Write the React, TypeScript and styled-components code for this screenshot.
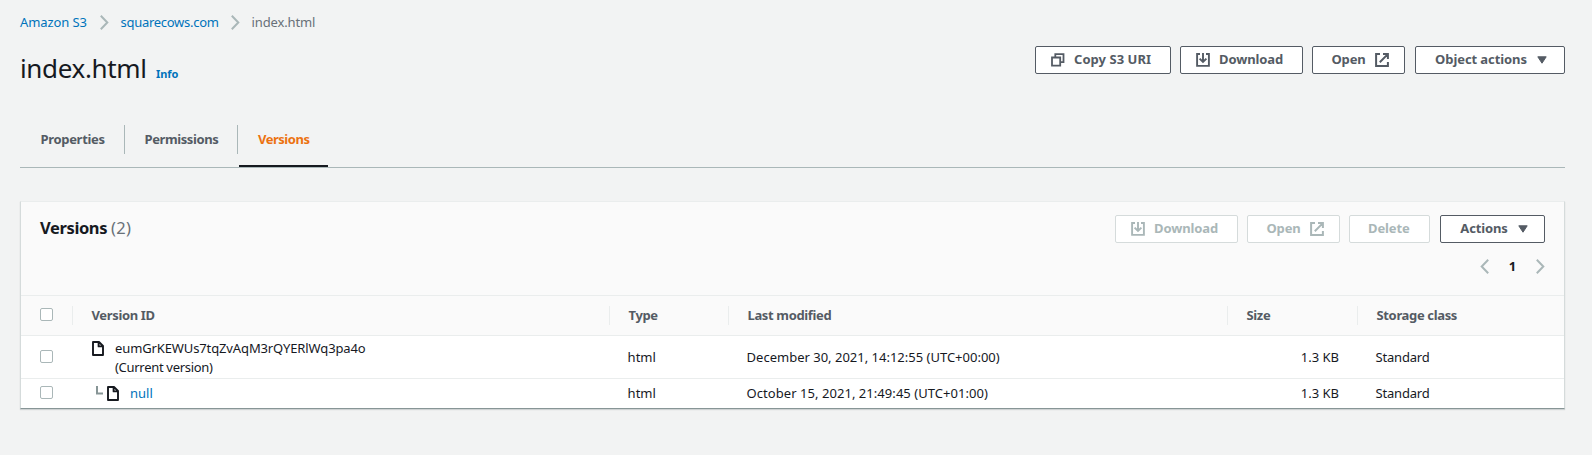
import React from "react";
import styled, { createGlobalStyle, css } from "styled-components";

const GlobalStyle = createGlobalStyle`
  * { box-sizing: border-box; }
  body {
    margin: 0;
    background: #f2f3f3;
    color: #16191f;
    font: 13px/18px "Noto Sans", "Open Sans", sans-serif;
  }
`;

const Page = styled.main`
  height: 455px;
  padding: 13px 27px 0 20px;
  overflow: hidden;
`;

const Text = styled.span<{ $track?: number }>`
  letter-spacing: ${(p) => p.$track ?? 0}px;
  white-space: nowrap;
`;

const Breadcrumbs = styled.nav`
  display: flex;
  align-items: center;
  height: 18px;
  color: #687078;
`;

const Link = styled.a<{ $track?: number }>`
  color: #0073bb;
  letter-spacing: ${(p) => p.$track ?? 0}px;
  white-space: nowrap;
`;

const Crumb = styled.span<{ $width: number }>`
  display: flex;
  align-items: center;
  justify-content: space-between;
  width: ${(p) => p.$width}px;
  padding-right: 12px;
`;

const TitleBar = styled.header`
  display: flex;
  justify-content: space-between;
  height: 94px;
  padding-top: 15px;
`;

const TitleGroup = styled.div`
  display: flex;
  align-items: baseline;
  height: 44px;
`;

const Title = styled.h1`
  width: 136px;
  margin: 0;
  font-size: 26px;
  font-weight: 400;
  line-height: 44px;
  letter-spacing: -0.35px;
`;

const InfoLink = styled(Link)`
  font-size: 11px;
  font-weight: 700;
`;

const Buttons = styled.div`
  display: flex;
  gap: 9px;
  align-items: flex-start;
`;

const Button = styled.button<{ $width: number }>`
  display: flex;
  align-items: center;
  gap: 9px;
  width: ${(p) => p.$width}px;
  height: 28px;
  padding: 0 0 0 15px;
  border: 1px solid #545b64;
  border-radius: 2px;
  background: #fff;
  color: #545b64;
  font: 700 13px/20px "Noto Sans", "Open Sans", sans-serif;
  letter-spacing: -0.12px;
  white-space: nowrap;

  &:disabled {
    border-color: #d5dbdb;
    color: #aab7b8;
  }
`;

const Label = styled.span<{ $inset?: boolean; $width?: number; $track?: number }>`
  padding-bottom: 2px;
  ${(p) => p.$inset && css`margin-left: 3px;`}
  ${(p) => p.$width && css`width: ${p.$width}px;`}
  ${(p) => p.$track !== undefined && css`letter-spacing: ${p.$track}px;`}
`;

const Tabs = styled.div`
  display: flex;
  height: 43px;
  border-bottom: 1px solid #aab7b8;
`;

const Tab = styled.button<{ $width: number; $active?: boolean; $track?: number }>`
  display: flex;
  width: ${(p) => p.$width}px;
  height: 42px;
  padding: 0;
  border: 0;
  border-bottom: 2px solid ${(p) => (p.$active ? "#16191f" : "transparent")};
  background: none;
  color: ${(p) => (p.$active ? "#ec7211" : "#545b64")};
  font: 700 13px/29px "Noto Sans", "Open Sans", sans-serif;
  letter-spacing: ${(p) => p.$track ?? -0.4}px;

  & + & {
    margin-left: 1px;
  }
`;

const TabText = styled.span<{ $divided?: boolean; $indent?: number }>`
  flex: 1;
  height: 29px;
  padding-left: ${(p) => p.$indent ?? 19}px;
  border-right: ${(p) => (p.$divided ? "1px solid #aab7b8" : "0")};
  text-align: left;
`;

const Card = styled.section`
  height: 208px;
  margin-top: 33px;
  border: 1px solid #d5dbdb;
  border-top-color: #eaeded;
  border-bottom: 1px solid #879596;
  background: #fff;
  box-shadow: 0 1px 1px rgba(0, 28, 36, 0.15);
`;

const CardHeader = styled.div`
  display: flex;
  justify-content: space-between;
  height: 93px;
  padding: 13px 19px 0 19px;
  background: #fafafa;
`;

const CardTitle = styled.h2`
  margin: 0;
  font-size: 16.5px;
  line-height: 26px;
  letter-spacing: -0.38px;
  white-space: nowrap;
`;

const Count = styled.span`
  color: #687078;
  font-weight: 400;
  letter-spacing: 0.3px;
`;

const MenuButton = styled(Button)`
  margin-left: 1px;
`;

const Pager = styled.div`
  display: flex;
  justify-content: space-between;
  align-items: center;
  width: 65px;
  height: 18px;
  margin: 14px 0 0 auto;
  font-weight: 700;
`;

const Row = styled.div<{ $height: number; $head?: boolean }>`
  display: grid;
  grid-template-columns: 51px 537px 119px 499px 130px 1fr;
  align-items: center;
  height: ${(p) => p.$height}px;
  border-top: 1px solid #eaeded;
  ${(p) =>
    p.$head &&
    css`
      background: #fafafa;
      color: #545b64;
      font-weight: 700;
    `}
`;

const HeadCell = styled.div`
  height: 19px;
  padding-left: 18.5px;
  border-left: 1px solid #eaeded;
  line-height: 19px;
  letter-spacing: -0.35px;
  white-space: nowrap;
`;

const Cell = styled.div<{ $right?: boolean; $track?: number }>`
  padding: 0 18px 1px 18.6px;
  text-align: ${(p) => (p.$right ? "right" : "left")};
  letter-spacing: ${(p) => p.$track ?? 0}px;
  white-space: nowrap;
`;

const CheckCell = styled.div`
  padding-left: 19px;
`;

const Checkbox = styled.input.attrs({ type: "checkbox" })`
  display: block;
  appearance: none;
  width: 13px;
  height: 13px;
  margin: 0 0 2px;
  border: 1px solid #aab7b8;
  border-radius: 2px;
  background: #fff;
`;

const VersionCell = styled.div<{ $child?: boolean }>`
  display: flex;
  align-items: flex-start;
  padding-left: ${(p) => (p.$child ? 24 : 21)}px;
  padding-top: ${(p) => (p.$child ? 0 : 2)}px;
`;

const VersionName = styled.div`
  display: flex;
  flex-direction: column;
  margin-left: 11px;
  line-height: 19px;
`;

const Glyph = styled.svg`
  display: block;
  flex: none;
  fill: none;
  stroke: currentColor;
  stroke-width: 2;
`;

const FileGlyph = styled(Glyph)`
  margin: 2px 0 0 -1px;
`;

const BranchGlyph = styled(Glyph)`
  margin: 2px 5px 0 0;
`;

const Chevron = ({ left }: { left?: boolean }) => (
  <Glyph width="9" height="15" viewBox="0 0 9 15" color="#aab7b8">
    <path d={left ? "M8.2 .8 1.7 7.5 8.2 14.2" : "M.8 .8 7.3 7.5 .8 14.2"} />
  </Glyph>
);

const CopyIcon = () => (
  <Glyph width="14" height="14" viewBox="0 0 14 14">
    <path d="M1 4.5h8.2V12.7H1zM4.3 4.5V1.2h8.2v8H9.2" strokeWidth="1.8" />
  </Glyph>
);

const DownloadIcon = () => (
  <Glyph width="14" height="14" viewBox="0 0 14 14">
    <path d="M4 1H1.1v11.9h11.8V1H10M7 0v9M3.6 5.6 7 9l3.4-3.4" strokeWidth="1.9" />
  </Glyph>
);

const ExternalIcon = () => (
  <Glyph width="14" height="14" viewBox="0 0 14 14">
    <path d="M5 1.1H1.1v11.8h11.8V9M8 1.1h4.9V6M12.6 1.4 4.8 9.2" strokeWidth="2" />
  </Glyph>
);

const Caret = () => (
  <Glyph width="10" height="8" viewBox="0 0 10 8">
    <path d="M.8.8h8.4L5 7.2z" fill="currentColor" strokeWidth="1" strokeLinejoin="round" />
  </Glyph>
);

const FileIcon = () => (
  <FileGlyph width="12" height="15" viewBox="0 0 12 15">
    <path d="M1 1h6l4 4v9H1zM6.6 1v4.4H11" strokeWidth="1.9" strokeLinejoin="round" />
  </FileGlyph>
);

const Branch = () => (
  <BranchGlyph width="7" height="9" viewBox="0 0 7 9" color="#879596">
    <path d="M1 0v7.5h6" />
  </BranchGlyph>
);

export default function App() {
  return (
    <Page>
      <GlobalStyle />
      <Breadcrumbs>
        <Crumb $width={100.5}>
          <Link $track={-0.1}>Amazon S3</Link>
          <Chevron />
        </Crumb>
        <Crumb $width={131}>
          <Link $track={-0.28}>squarecows.com</Link>
          <Chevron />
        </Crumb>
        <Text $track={-0.12}>index.html</Text>
      </Breadcrumbs>

      <TitleBar>
        <TitleGroup>
          <Title>index.html</Title>
          <InfoLink $track={-0.1}>Info</InfoLink>
        </TitleGroup>
        <Buttons>
          <Button $width={136}>
            <CopyIcon />
            <Label $track={0.05}>Copy S3 URI</Label>
          </Button>
          <Button $width={123}>
            <DownloadIcon />
            <Label>Download</Label>
          </Button>
          <Button $width={93}>
            <Label $inset $width={35}>Open</Label>
            <ExternalIcon />
          </Button>
          <MenuButton $width={150}>
            <Label $inset $width={94} $track={-0.08}>Object actions</Label>
            <Caret />
          </MenuButton>
        </Buttons>
      </TitleBar>

      <Tabs>
        <Tab $width={105} $track={-0.3}>
          <TabText $divided $indent={20.4}>Properties</TabText>
        </Tab>
        <Tab $width={112}>
          <TabText $divided $indent={18.5}>Permissions</TabText>
        </Tab>
        <Tab $width={89} $active $track={-0.48}>
          <TabText>Versions</TabText>
        </Tab>
      </Tabs>

      <Card>
        <CardHeader>
          <CardTitle>
            Versions <Count>(2)</Count>
          </CardTitle>
          <div>
            <Buttons>
              <Button $width={123} disabled>
                <DownloadIcon />
                <Label>Download</Label>
              </Button>
              <Button $width={93} disabled>
                <Label $inset $width={35}>Open</Label>
                <ExternalIcon />
              </Button>
              <Button $width={81} disabled>
                <Label $inset>Delete</Label>
              </Button>
              <MenuButton $width={105}>
                <Label $inset $width={50}>Actions</Label>
                <Caret />
              </MenuButton>
            </Buttons>
            <Pager>
              <Chevron left />
              <span>1</span>
              <Chevron />
            </Pager>
          </div>
        </CardHeader>

        <Row $height={40} $head>
          <CheckCell>
            <Checkbox />
          </CheckCell>
          <HeadCell>Version ID</HeadCell>
          <HeadCell>Type</HeadCell>
          <HeadCell>Last modified</HeadCell>
          <HeadCell>Size</HeadCell>
          <HeadCell>Storage class</HeadCell>
        </Row>
        <Row $height={43}>
          <CheckCell>
            <Checkbox />
          </CheckCell>
          <VersionCell>
            <FileIcon />
            <VersionName>
              <Text $track={-0.12}>eumGrKEWUs7tqZvAqM3rQYERlWq3pa4o</Text>
              <Text $track={-0.3}>(Current version)</Text>
            </VersionName>
          </VersionCell>
          <Cell>html</Cell>
          <Cell>December 30, 2021, 14:12:55 (UTC+00:00)</Cell>
          <Cell $right>1.3 KB</Cell>
          <Cell $track={-0.2}>Standard</Cell>
        </Row>
        <Row $height={30}>
          <CheckCell>
            <Checkbox />
          </CheckCell>
          <VersionCell $child>
            <Branch />
            <FileIcon />
            <VersionName>
              <Link>null</Link>
            </VersionName>
          </VersionCell>
          <Cell>html</Cell>
          <Cell $track={0.05}>October 15, 2021, 21:49:45 (UTC+01:00)</Cell>
          <Cell $right>1.3 KB</Cell>
          <Cell $track={-0.2}>Standard</Cell>
        </Row>
      </Card>
    </Page>
  );
}
